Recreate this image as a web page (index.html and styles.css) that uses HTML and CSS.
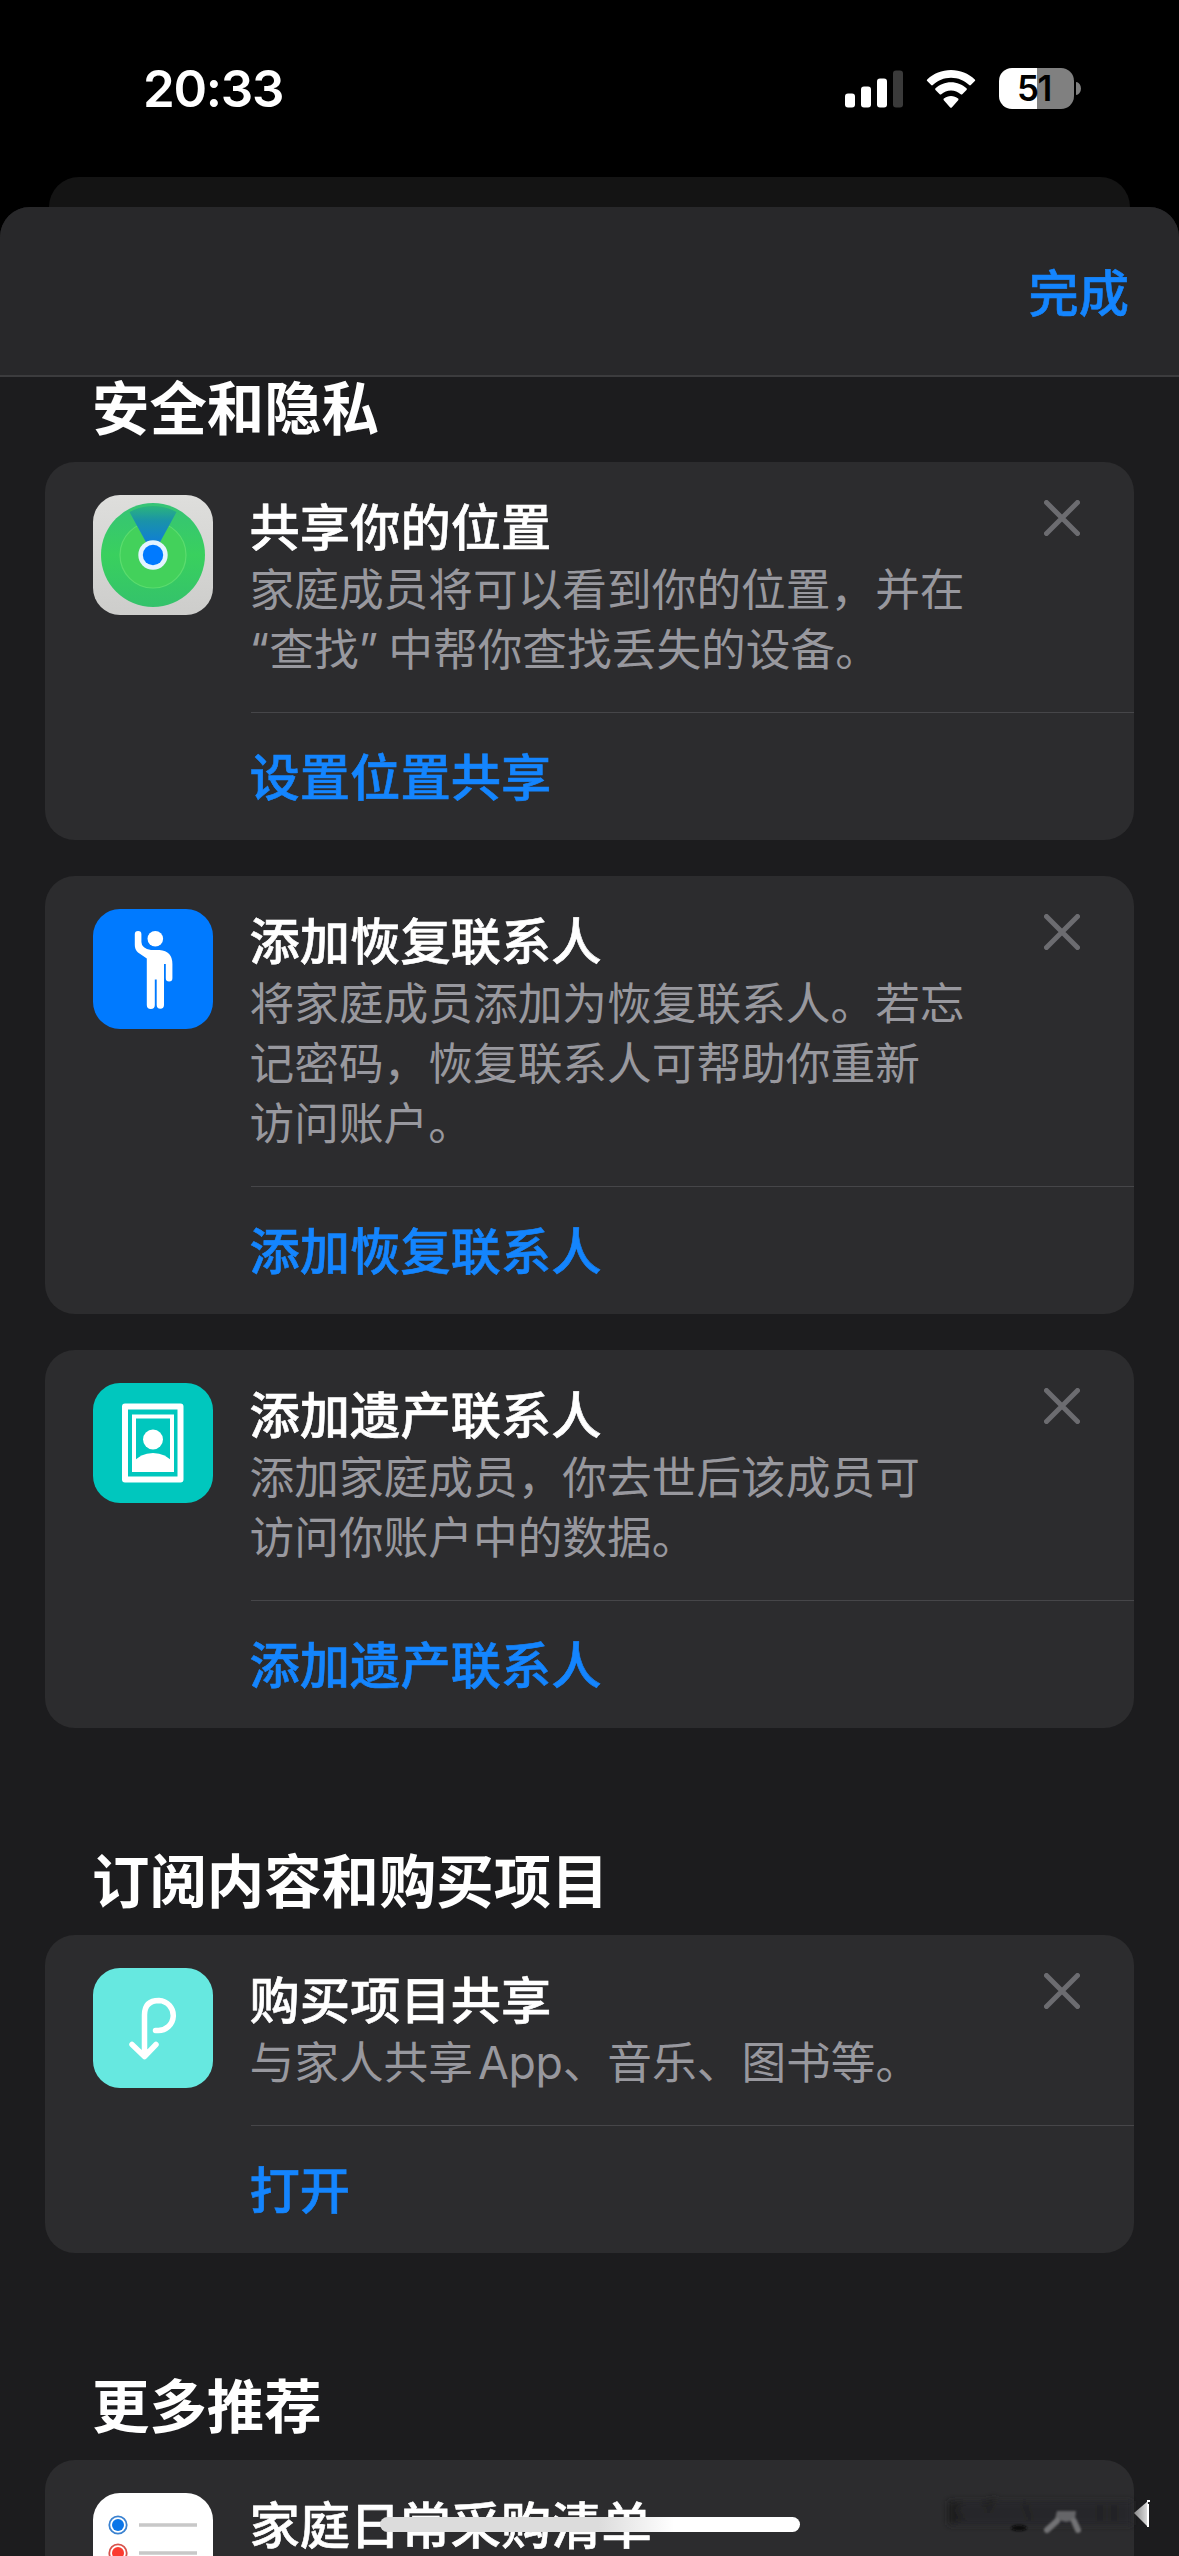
FILE: index.html
```html
<!DOCTYPE html>
<html lang="zh-CN">
<head>
<meta charset="utf-8">
<title>家人共享</title>
<link rel="stylesheet" href="styles.css">
</head>
<body>
<div class="screen">
  <header class="status">
    <span class="time">20:33</span>
    <div class="indicators">
      <svg class="signal" width="58" height="38" viewBox="0 0 58 38"><g fill="#fff"><rect x="0" y="23.500" width="10" height="14" rx="3"/><rect x="16" y="16.500" width="10" height="21" rx="3"/><rect x="32" y="8.500" width="10" height="29" rx="3"/></g><rect x="48" y="0.500" width="10" height="37" rx="3" fill="#3a3a3a"/></svg>
      <svg class="wifi" width="52" height="38" viewBox="0 0 52 38"><path fill="#fff" d="M26 7.800c7 0 13.400 2.700 18.200 7.300.5.500 1.100.5 1.600 0l4-4c.5-.5.500-1.200 0-1.700C43.500 3.500 35.100 0 26 0S8.500 3.500 2.200 9.400c-.5.500-.5 1.200 0 1.700l4 4c.5.500 1.100.5 1.600 0C12.600 10.500 19 7.800 26 7.800zM26 20.500c3.700 0 7.100 1.400 9.700 3.700.5.500 1.100.5 1.600 0l4.200-4.200c.5-.5.500-1.200 0-1.700-4.100-3.800-9.500-6.100-15.500-6.100s-11.400 2.300-15.500 6.100c-.5.500-.5 1.200 0 1.700l4.200 4.200c.5.500 1.100.5 1.600 0 2.600-2.300 6-3.700 9.700-3.700zM33.200 30.200c.4-.5.400-1.200-.1-1.600-2-1.700-4.500-2.600-7.100-2.600s-5.100.9-7.100 2.600c-.5.400-.5 1.100-.1 1.600l6.400 7.200c.4.500 1.200.5 1.600 0z"/></svg>
      <div class="battery"><span class="battery-level">51</span><span class="battery-nub"></span></div>
    </div>
  </header>
  <div class="back-sheet"></div>
  <main class="sheet">
    <nav class="toolbar"><a class="done">完成</a></nav>

    <h2 class="heading heading-first">安全和隐私</h2>
    <div class="cards">
      <section class="card">
        <div class="card-body">
          <svg class="icon" viewBox="0 0 120 120">
            <defs>
              <linearGradient id="plate" x1="0" y1="0" x2="0" y2="1"><stop offset="0" stop-color="#dededc"/><stop offset="1" stop-color="#cdcdcb"/></linearGradient>
              <linearGradient id="beam" x1="0" y1="0" x2="0" y2="1"><stop offset="0" stop-color="#2bb57c"/><stop offset=".3" stop-color="#1a93a8"/><stop offset="1" stop-color="#0a72ee"/></linearGradient>
              <linearGradient id="outer" x1="0" y1="0" x2="0" y2="1"><stop offset="0" stop-color="#36c376"/><stop offset=".5" stop-color="#39d05e"/><stop offset="1" stop-color="#34c26b"/></linearGradient>
            </defs>
            <rect width="120" height="120" rx="27" fill="url(#plate)"/>
            <circle cx="60" cy="60" r="52" fill="url(#outer)"/>
            <circle cx="60" cy="60" r="33" fill="#43d15b" stroke="#5bdc6d" stroke-width="1.200"/>
            <path d="M60 60L36.500 17A49 49 0 0 1 83.500 17Z" fill="url(#beam)"/>
            <circle cx="60" cy="60" r="14.700" fill="#e4f4ff"/><circle cx="60" cy="60" r="10.200" fill="#007aff"/>
          </svg>
          <div class="copy"><h3 class="title">共享你的位置</h3><p class="desc">家庭成员将可以看到你的位置，并在<br><span class="quote">“</span>查找<span class="quote quote-end">”</span>中帮你查找丢失的设备。</p></div>
          <svg class="close" viewBox="0 0 36 36"><path d="M2.500 2.500L33.500 33.500M33.500 2.500L2.500 33.500"/></svg>
        </div>
        <a class="action">设置位置共享</a>
      </section>

      <section class="card">
        <div class="card-body">
          <svg class="icon" viewBox="0 0 120 120">
            <rect width="120" height="120" rx="27" fill="#007aff"/>
            <g fill="#fff"><circle cx="62.300" cy="29.800" r="7.800"/><path d="M41.800 25.300a3.300 3.300 0 0 1 6.600 0V33q0 3.500 2.600 5.200Q54.500 41 58 41H66.500Q79.400 42 79.400 55V69.200a3.300 3.300 0 0 1-6.600 0V55H71v41a3.600 3.600 0 0 1-7.300 0V70.500h-1.900V96a4 4 0 0 1-8 0V49.500L45 43.500Q41.800 41 41.800 36Z"/></g>
          </svg>
          <div class="copy"><h3 class="title">添加恢复联系人</h3><p class="desc">将家庭成员添加为恢复联系人。若忘<br>记密码，恢复联系人可帮助你重新<br>访问账户。</p></div>
          <svg class="close" viewBox="0 0 36 36"><path d="M2.500 2.500L33.500 33.500M33.500 2.500L2.500 33.500"/></svg>
        </div>
        <a class="action">添加恢复联系人</a>
      </section>

      <section class="card">
        <div class="card-body">
          <svg class="icon" viewBox="0 0 120 120">
            <rect width="120" height="120" rx="27" fill="#00c7be"/>
            <rect x="32" y="23.500" width="55.500" height="73" fill="none" stroke="#fff" stroke-width="6" stroke-linejoin="round"/>
            <rect x="41" y="33.500" width="38" height="53.500" fill="none" stroke="#fff" stroke-width="4"/>
            <circle cx="60" cy="56.500" r="10" fill="#fff"/><path d="M40 89V80Q47 70 60 70T80 80V89Z" fill="#fff"/>
          </svg>
          <div class="copy"><h3 class="title">添加遗产联系人</h3><p class="desc">添加家庭成员，你去世后该成员可<br>访问你账户中的数据。</p></div>
          <svg class="close" viewBox="0 0 36 36"><path d="M2.500 2.500L33.500 33.500M33.500 2.500L2.500 33.500"/></svg>
        </div>
        <a class="action">添加遗产联系人</a>
      </section>
    </div>

    <h2 class="heading">订阅内容和购买项目</h2>
    <div class="cards">
      <section class="card">
        <div class="card-body">
          <svg class="icon" viewBox="0 0 120 120">
            <rect width="120" height="120" rx="27" fill="#66e8e0"/>
            <path d="M62.500 62.500H64.500A15 15 0 0 0 66 32.500Q51.500 32.500 51.500 47V88M39 76.500L51.500 88.500L63 76.500" fill="none" stroke="#fff" stroke-width="5.500" stroke-linecap="round" stroke-linejoin="round"/>
          </svg>
          <div class="copy"><h3 class="title">购买项目共享</h3><p class="desc">与家人共享<span class="latin">App</span>、音乐、图书等。</p></div>
          <svg class="close" viewBox="0 0 36 36"><path d="M2.500 2.500L33.500 33.500M33.500 2.500L2.500 33.500"/></svg>
        </div>
        <a class="action">打开</a>
      </section>
    </div>

    <h2 class="heading">更多推荐</h2>
    <div class="cards">
      <section class="card card-cut">
        <div class="card-body">
          <svg class="icon" viewBox="0 0 120 120">
            <rect width="120" height="120" rx="27" fill="#fff"/>
            <circle cx="25" cy="32" r="8.700" fill="none" stroke="#3b82d0" stroke-width="1.800"/><circle cx="25" cy="32" r="6" fill="#0a75e8"/>
            <circle cx="25" cy="60" r="8.700" fill="none" stroke="#d8534c" stroke-width="1.800"/><circle cx="25" cy="60" r="6" fill="#fb3b30"/>
            <path d="M46 32H104M46 60H104" stroke="#c8c8c8" stroke-width="3.500"/>
          </svg>
          <div class="copy"><h3 class="title">家庭日常采购清单</h3></div>
        </div>
      </section>
    </div>
  </main>
  <div class="home-bar"></div>
  <svg class="smudge" width="239" height="60" viewBox="0 0 239 60">
    <defs>
      <filter id="soft" x="-20%" y="-40%" width="140%" height="180%"><feGaussianBlur stdDeviation="3"/></filter>
      <filter id="edge" x="-20%" y="-20%" width="140%" height="140%"><feGaussianBlur stdDeviation="0.800"/></filter>
      <linearGradient id="tip" x1="0" y1="0" x2="1" y2="0"><stop offset="0" stop-color="#888"/><stop offset="1" stop-color="#e0e0e0"/></linearGradient>
    </defs>
    <g filter="url(#soft)"><rect x="8" y="12" width="184" height="24" fill="#282829"/><path d="M8 12L24 14L14 22L26 28L8 36Z" fill="#1e1e1f"/><path d="M42 16L52 12L48 24M84 14L90 30M160 16V32M174 16V32" stroke="#202021" stroke-width="5" fill="none"/></g>
    <g filter="url(#edge)"><ellipse cx="79" cy="39" rx="8" ry="3" fill="#0a0a0a"/><path d="M117 22H136L135 31L126 33L115 30Z" fill="#656567"/><path d="M117 32L107 41M134 32L138 41" stroke="#727274" stroke-width="6" stroke-linecap="round"/></g>
    <path d="M194 24L208 12V38Z" fill="url(#tip)"/><path d="M208 38V15M207 12H210" stroke="#fff" stroke-width="2"/>
  </svg>
</div>
</body>
</html>
```

FILE: styles.css
```css
* { box-sizing: border-box; margin: 0; padding: 0; }
body { background: #000; }
.screen {
  position: relative;
  display: flex;
  flex-direction: column;
  width: 1179px;
  height: 2556px;
  overflow: hidden;
  background: #000;
  color: #fff;
  font-family: "Noto Sans CJK SC", sans-serif;
}
.status {
  display: flex;
  justify-content: space-between;
  align-items: center;
  height: 177px;
  padding: 0 98px 0 143px;
}
.time { font: 600 51px/60px Inter, sans-serif; letter-spacing: -1.300px; }
.indicators { display: flex; align-items: center; }
.wifi { margin: 0 22px; }
.battery {
  position: relative;
  width: 75px;
  height: 41px;
  border-radius: 13px;
  background: linear-gradient(90deg, #fff 38px, #808080 38px);
  margin-right: 7px;
}
.battery-level {
  display: block;
  padding-right: 5px;
  text-align: center;
  color: #000;
  font: 600 35px/41px Inter, sans-serif;
  letter-spacing: -1.500px;
}
.battery-nub {
  position: absolute;
  left: 77px;
  top: 14px;
  width: 5px;
  height: 13px;
  border-radius: 0 5px 5px 0 / 0 6.500px 6.500px 0;
  background: #808080;
}
.back-sheet {
  height: 30px;
  margin: 0 49px;
  border-radius: 30px 30px 0 0;
  background: #141414;
}
.sheet { flex: 1; min-height: 0; overflow: hidden; border-radius: 30px 30px 0 0; background: #1c1c1e; }
.toolbar {
  display: flex;
  align-items: flex-start;
  justify-content: flex-end;
  height: 170px;
  padding: 53px 50px 0 0;
  border-bottom: 2px solid #3c3c3e;
  background: #28282a;
}
.done { color: #1485fe; font-size: 50.200px; font-weight: 500; line-height: 60px; -webkit-text-stroke: 0.600px; }
.heading { margin: 110px 0 17px 92px; font-size: 57.400px; font-weight: 700; line-height: 80px; }
.heading-first { margin-top: -12px; }
.cards { display: flex; flex-direction: column; gap: 36px; padding: 0 45px; }
.card { border-radius: 30px; background: #2c2c2e; }
.card-body { display: flex; align-items: flex-start; padding: 33px 54px 33px 48px; }
.icon { flex: none; width: 120px; height: 120px; margin-right: 36.500px; }
.copy { flex: 1; padding-bottom: 2px; margin-top: -2px; white-space: nowrap; }
.title { height: 64px; font-size: 50.300px; font-weight: 500; line-height: 62px; -webkit-text-stroke: 0.600px; }
.desc { color: #98989e; font-size: 44.700px; line-height: 60px; }
.quote { font-family: Inter, sans-serif; line-height: 1; }
.quote-end { margin-right: 10px; }
.latin { font-family: Inter, sans-serif; line-height: 1; margin-left: 5px; letter-spacing: -0.300px; }
.close { flex: none; width: 36px; height: 36px; margin-top: 5px; fill: none; stroke: #6c6c70; stroke-width: 5; stroke-linecap: round; }
.action {
  display: block;
  height: 128px;
  margin-left: 206px;
  border-top: 1px solid #464649;
  color: #1485fe;
  font-size: 50.300px;
  font-weight: 500;
  line-height: 123px;
  text-indent: -1.500px;
  -webkit-text-stroke: 0.600px;
}
.card-cut { height: 160px; }
.home-bar {
  position: absolute;
  left: 380px;
  top: 2517px;
  width: 420px;
  height: 15px;
  border-radius: 8px;
  background: linear-gradient(90deg, #dcdcdc 0, #dcdcdc 52%, #fff 70%);
}
.smudge { position: absolute; left: 940px; top: 2489px; }
```
